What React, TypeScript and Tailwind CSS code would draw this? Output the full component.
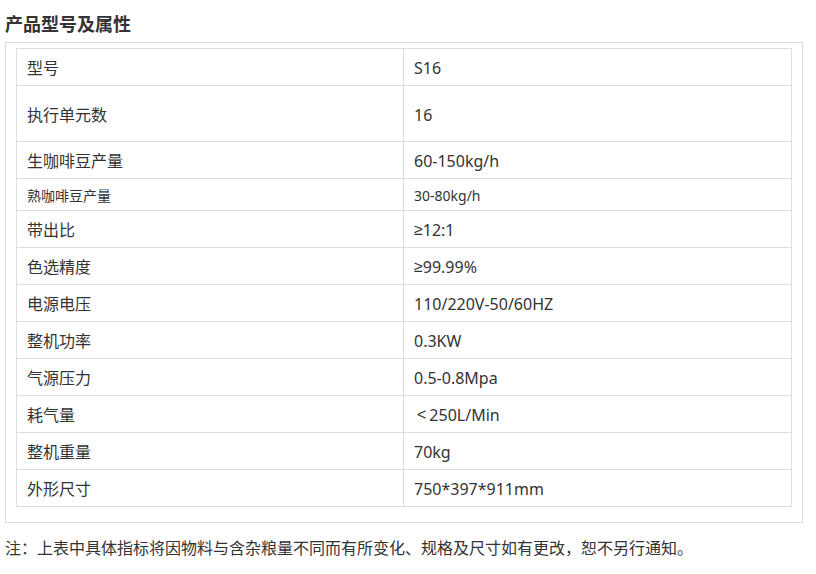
import React from "react";

const rows: { k: string; v: React.ReactNode; h: string; small?: boolean }[] = [
  { k: "型号", v: "S16", h: "h-[37px]" },
  { k: "执行单元数", v: "16", h: "h-[56px]" },
  { k: "生咖啡豆产量", v: "60-150kg/h", h: "h-[37px]" },
  { k: "熟咖啡豆产量", v: "30-80kg/h", h: "h-[32px]", small: true },
  {
    k: "带出比",
    v: (
      <>
        <span style={{ fontFamily: '"Liberation Sans", sans-serif' }}>≥</span>12:1
      </>
    ),
    h: "h-[37px]",
  },
  {
    k: "色选精度",
    v: (
      <>
        <span style={{ fontFamily: '"Liberation Sans", sans-serif' }}>≥</span>99.99%
      </>
    ),
    h: "h-[37px]",
  },
  { k: "电源电压", v: "110/220V-50/60HZ", h: "h-[37px]" },
  { k: "整机功率", v: "0.3KW", h: "h-[37px]" },
  { k: "气源压力", v: "0.5-0.8Mpa", h: "h-[37px]" },
  {
    k: "耗气量",
    v: (
      <>
        <span className="ml-[3px] mr-[3px]" style={{ fontFamily: '"Liberation Sans", sans-serif' }}>
          &lt;
        </span>
        250L/Min
      </>
    ),
    h: "h-[37px]",
  },
  { k: "整机重量", v: "70kg", h: "h-[37px]" },
  { k: "外形尺寸", v: "750*397*911mm", h: "h-[37px]" },
];

export default function App() {
  return (
    <div
      className="w-[816px] h-[574px] bg-white pl-[5px] text-[#333]"
      style={{ fontFamily: '"Noto Sans", "Noto Sans CJK SC", sans-serif' }}
    >
      <div className="pt-[12px] mb-[6px] text-[18px] leading-[24px] font-bold text-[#333]">
        产品型号及属性
      </div>
      <div className="w-[798px] border border-[#dddddd] pt-[5px] pb-[15px] px-[10px]">
        <div className="border-t border-l border-r border-[#dddddd]">
          {rows.map((r, i) => (
            <div key={i} className={`flex ${r.h} border-b border-[#dddddd]`}>
              <div
                className={`w-[387px] border-r border-[#dddddd] pl-[10px] pt-[2px] flex items-center ${
                  r.small ? "text-[14px]" : "text-[16px]"
                }`}
              >
                {r.k}
              </div>
              <div
                className={`flex-1 pl-[10px] pt-[2px] flex items-center ${
                  r.small ? "text-[14px]" : "text-[16px]"
                }`}
              >
                {r.v}
              </div>
            </div>
          ))}
        </div>
      </div>
      <div className="mt-[13px] text-[16px] leading-[24px]">
        注：上表中具体指标将因物料与含杂粮量不同而有所变化、规格及尺寸如有更改，恕不另行通知。
      </div>
    </div>
  );
}
